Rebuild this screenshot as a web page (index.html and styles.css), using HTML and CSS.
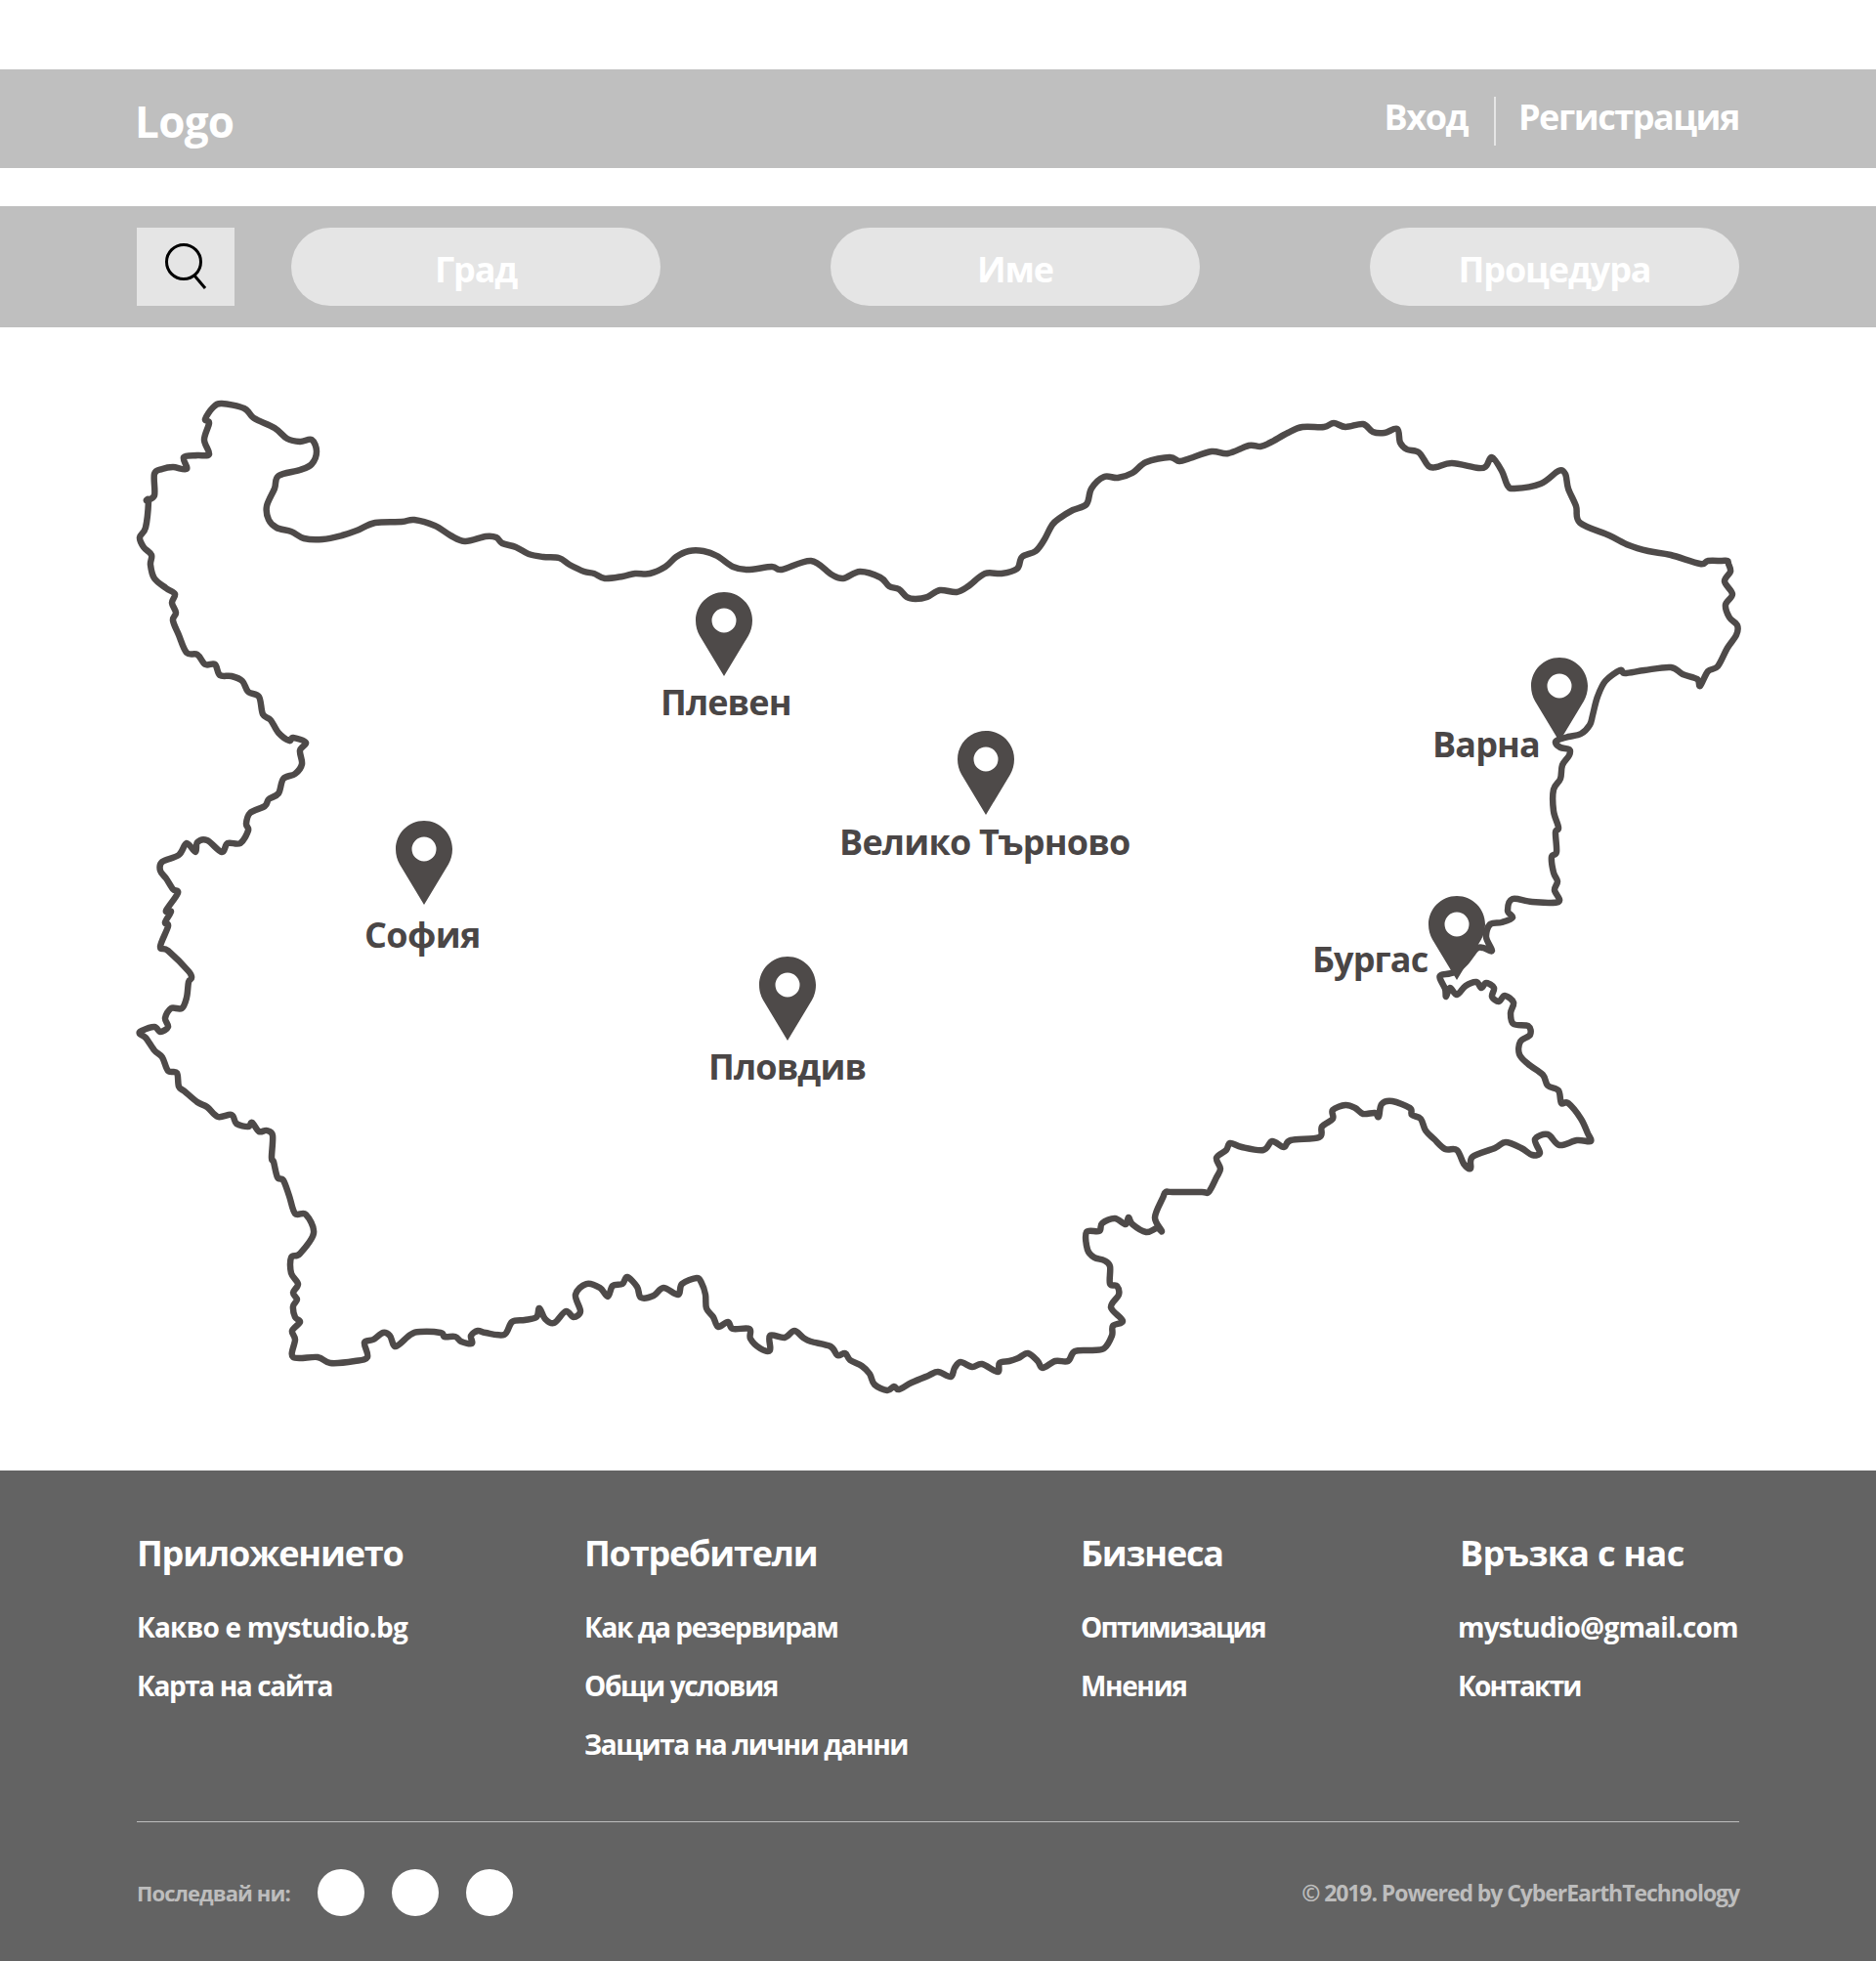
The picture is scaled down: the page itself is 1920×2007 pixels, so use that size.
FILE: index.html
```html
<!DOCTYPE html>
<html lang="bg">
<head>
<meta charset="utf-8">
<title>mystudio.bg</title>
<link rel="stylesheet" href="styles.css">
<script src="map.js" defer></script>
</head>
<body>
<header class="topbar">
  <div class="logo">Logo</div>
  <nav class="auth">
    <a class="auth-link">Вход</a>
    <span class="auth-sep"></span>
    <a class="auth-link">Регистрация</a>
  </nav>
</header>
<section class="search">
  <button class="search-btn" aria-label="Търсене">
    <svg class="search-icon" viewBox="0 0 44 48"><circle cx="20" cy="19" r="17.5"/><line x1="31" y1="33" x2="42" y2="46"/></svg>
  </button>
  <div class="pills">
    <div class="pill">Град</div>
    <div class="pill">Име</div>
    <div class="pill">Процедура</div>
  </div>
</section>
<main class="map">
  <svg class="map-svg" viewBox="0 335 1920 1170">
    <path class="border" id="border" data-points="227,413 250,418 260,428 281,438 294,449 307,452 319,450 324,462 319,475 307,481 285,487 281,500 273,518 275,532 283,540 298,544 311,551 330,552 350,548 365,543 384,535 411,534 424,532 445,538 461,548 476,554 497,549 508,550 514,556 528,560 541,567 556,570 572,571 583,578 598,585 608,587 619,592 637,590 650,587 665,587 681,580 692,570 705,564 720,564 734,569 750,580 765,583 790,580 800,583 830,574 851,588 863,592 880,585 901,591 910,600 920,603 928,611 937,613 949,611 962,604 979,606 991,600 1008,587 1025,587 1041,582 1046,570 1060,564 1069,552 1077,537 1085,530 1098,522 1112,516 1117,500 1130,488 1144,489 1159,484 1173,473 1197,468 1207,472 1218,469 1240,462 1257,464 1278,456 1290,457 1300,453 1318,443 1333,437 1355,437 1365,433 1377,437 1395,434 1405,442 1417,443 1430,439 1433,453 1440,460 1452,463 1462,477 1470,478 1486,474 1513,479 1521,477 1527,468 1537,482 1543,497 1550,500 1577,495 1595,482 1602,485 1605,500 1613,518 1617,535 1647,548 1667,558 1687,564 1710,568 1740,577 1748,574 1762,574 1768,574 1769,577 1771,585 1765,595 1773,608 1766,619 1770,632 1778,640 1777,650 1768,663 1758,682 1748,687 1740,702 1737,695 1722,690 1710,683 1683,686 1663,689 1658,686 1643,697 1635,713 1630,732 1627,742 1618,751 1605,754 1595,757 1592,760 1597,765 1606,767 1606,773 1599,783 1597,797 1590,808 1590,830 1595,847 1592,852 1593,872 1588,877 1590,893 1594,902 1591,911 1595,923 1568,923 1548,920 1543,932 1548,939 1537,944 1525,946 1521,959 1527,973 1518,970 1511,971 1500,985 1488,995 1475,998 1474,1002 1479,1012 1480,1020 1484,1011 1491,1018 1500,1009 1511,1005 1516,1011 1521,1006 1529,1011 1527,1020 1534,1025 1540,1019 1549,1026 1546,1037 1549,1048 1564,1050 1566,1059 1556,1066 1555,1079 1564,1089 1579,1100 1584,1111 1595,1116 1598,1129 1605,1129 1618,1145 1625,1160 1628,1168 1614,1167 1596,1172 1584,1161 1571,1166 1576,1180 1568,1182 1557,1175 1541,1169 1530,1175 1507,1184 1505,1196 1498,1191 1491,1177 1479,1176 1468,1166 1459,1157 1454,1145 1445,1141 1443,1134 1425,1127 1414,1130 1411,1143 1407,1139 1395,1140 1387,1134 1377,1131 1364,1136 1364,1145 1353,1153 1350,1164 1321,1167 1314,1174 1302,1168 1293,1177 1271,1174 1259,1170 1255,1177 1245,1185 1249,1196 1245,1205 1237,1220 1230,1220 1200,1220 1193,1220 1190,1226 1182,1246 1189,1260 1184,1257 1173,1261 1159,1253 1155,1246 1152,1253 1141,1247 1128,1252 1125,1260 1112,1261 1113,1279 1120,1287 1130,1290 1136,1296 1136,1314 1143,1316 1145,1325 1137,1338 1149,1352 1139,1357 1138,1367 1130,1380 1118,1382 1100,1383 1093,1393 1080,1393 1067,1400 1062,1393 1052,1385 1042,1390 1033,1393 1023,1395 1021,1404 1005,1396 995,1399 983,1394 977,1400 973,1409 960,1404 950,1408 933,1415 920,1422 915,1419 908,1423 895,1417 890,1406 882,1398 870,1392 865,1385 857,1387 850,1378 830,1373 822,1369 813,1362 803,1369 788,1367 788,1382 778,1380 768,1370 767,1360 750,1360 745,1353 735,1358 730,1348 723,1339 722,1325 718,1313 713,1308 698,1314 694,1325 679,1318 669,1326 656,1328 652,1317 642,1307 637,1314 627,1316 622,1327 614,1318 600,1314 589,1325 594,1342 587,1348 579,1342 567,1354 558,1350 552,1339 549,1348 537,1351 524,1353 516,1366 497,1364 489,1362 482,1367 483,1375 472,1373 466,1368 455,1368 451,1364 430,1363 420,1366 405,1378 399,1367 392,1364 382,1371 373,1374 376,1389 363,1393 338,1395 325,1389 300,1389 302,1371 299,1362 307,1353 302,1348 300,1337 304,1330 300,1323 305,1314 298,1303 298,1287 307,1283 321,1262 313,1243 302,1242 296,1224 290,1208 284,1205 280,1189 278,1185 279,1162 273,1157 265,1158 258,1149 254,1153 242,1150 237,1141 223,1143 212,1133 202,1128 189,1117 183,1112 181,1098 172,1096 166,1082 158,1075 149,1062 143,1058 145,1055 158,1051 164,1056 172,1051 169,1042 175,1032 186,1032 191,1021 193,1005 196,1001 193,994 172,973 164,969 172,948 169,944 175,933 170,932 182,914 177,910 170,899 164,891 166,882 183,875 191,863 200,872 202,862 212,860 227,872 233,863 246,863 254,850 252,843 256,832 271,825 275,818 285,812 290,797 302,792 309,782 307,768 313,760 300,755 296,758 285,750 277,737 269,731 265,713 254,708 248,697 237,692 225,691 220,680 210,680 202,670 191,668 183,650 177,635 180,627 176,617 179,608 170,602 158,592 154,578 155,568 147,560 143,550 149,540 152,513 150,512 158,507 158,485 166,480 177,478 191,480 188,468 202,466 214,465 209,450 214,433 210,429 218,417"/>
    <symbol id="pin" viewBox="0 0 58 86">
      <path fill-rule="evenodd" d="M29 0C45 0 58 13 58 29C58 35 56.500 40 54 44.500L29 86L4 44.500C1.500 40 0 35 0 29C0 13 13 0 29 0ZM29 16.500A12.500 12.500 0 1 0 29 41.500A12.500 12.500 0 1 0 29 16.500Z"/>
    </symbol>
  </svg>
  <svg class="pin pin-pleven" viewBox="0 0 58 86"><use href="#pin"/></svg>
  <div class="city city-pleven">Плевен</div>
  <svg class="pin pin-tarnovo" viewBox="0 0 58 86"><use href="#pin"/></svg>
  <div class="city city-tarnovo">Велико Търново</div>
  <svg class="pin pin-sofia" viewBox="0 0 58 86"><use href="#pin"/></svg>
  <div class="city city-sofia">София</div>
  <svg class="pin pin-plovdiv" viewBox="0 0 58 86"><use href="#pin"/></svg>
  <div class="city city-plovdiv">Пловдив</div>
  <svg class="pin pin-varna" viewBox="0 0 58 86"><use href="#pin"/></svg>
  <div class="city city-varna">Варна</div>
  <svg class="pin pin-burgas" viewBox="0 0 58 86"><use href="#pin"/></svg>
  <div class="city city-burgas">Бургас</div>
</main>
<footer class="footer">
  <div class="columns">
    <div class="col">
      <h3 class="col-title">Приложението</h3>
      <a class="col-link col-link-latin">Какво е mystudio.bg</a>
      <a class="col-link">Карта на сайта</a>
    </div>
    <div class="col">
      <h3 class="col-title">Потребители</h3>
      <a class="col-link">Как да резервирам</a>
      <a class="col-link">Общи условия</a>
      <a class="col-link">Защита на лични данни</a>
    </div>
    <div class="col">
      <h3 class="col-title">Бизнеса</h3>
      <a class="col-link col-link-tight">Оптимизация</a>
      <a class="col-link">Мнения</a>
    </div>
    <div class="col">
      <h3 class="col-title col-title-wide">Връзка с нас</h3>
      <a class="col-link col-link-latin">mystudio@gmail.com</a>
      <a class="col-link col-link-tight">Контакти</a>
    </div>
  </div>
  <div class="bottom">
    <div class="follow">
      <span class="follow-label">Последвай ни:</span>
      <span class="dot"></span><span class="dot"></span><span class="dot"></span>
    </div>
    <div class="copy">© 2019. Powered by CyberEarthTechnology</div>
  </div>
</footer>
</body>
</html>
```
FILE: styles.css
```css
* { box-sizing: border-box; }
body {
  margin: 0;
  padding-top: 71px;
  background: #fff;
  font-family: "Open Sans", "Noto Sans", sans-serif;
  font-weight: 700;
  color: #fff;
}
.topbar {
  height: 101px;
  background: #bfbfbf;
  padding: 0 140px;
  display: flex;
  justify-content: space-between;
  align-items: flex-start;
}
.logo { font-size: 44px; line-height: 60px; margin: 23px 0 0 -2px; letter-spacing: -0.7px; }
.auth { display: flex; align-items: flex-start; margin-top: 28px; }
.auth-link { font-size: 36px; line-height: 44px; margin-top: -1px; letter-spacing: -1.45px; }
.auth-sep { width: 2px; height: 50px; background: #e5e5e5; margin: 0 23px 0 27px; }
.search {
  margin-top: 39px;
  height: 124px;
  background: #bfbfbf;
  padding: 22px 140px;
  display: flex;
  gap: 58px;
}
.search-btn {
  flex: none;
  width: 100px;
  height: 80px;
  border: 0;
  padding: 0;
  background: #e5e5e5;
  display: flex;
  align-items: center;
  justify-content: center;
}
.search-icon { width: 44px; height: 48px; fill: none; stroke: #000; stroke-width: 3; }
.pills { flex: 1; display: flex; justify-content: space-between; }
.pill {
  width: 378px;
  height: 80px;
  border-radius: 40px;
  background: #e5e5e5;
  text-align: center;
  font-size: 36px;
  line-height: 86px;
  letter-spacing: -1.1px;
}
.map { position: relative; height: 1170px; }
.map-svg { display: block; width: 1920px; height: 1170px; }
.border { fill: none; stroke: #4e4a49; stroke-width: 6.500; stroke-linejoin: round; stroke-linecap: round; }
.pin { position: absolute; width: 58px; height: 86px; fill: #4e4a49; }
.pin-pleven { left: 712px; top: 271px; }
.pin-tarnovo { left: 980px; top: 413px; }
.pin-sofia { left: 405px; top: 505px; }
.pin-plovdiv { left: 777px; top: 644px; }
.pin-varna { left: 1567px; top: 338px; }
.pin-burgas { left: 1462px; top: 582px; }
.city {
  position: absolute;
  font-size: 36px;
  line-height: 40px;
  color: #4a4646;
  white-space: nowrap;
  letter-spacing: -0.9px;
}
.city-pleven { left: 676px; top: 364px; }
.city-tarnovo { left: 859px; top: 507px; letter-spacing: -0.8px; }
.city-sofia { left: 373px; top: 602px; letter-spacing: -0.6px; }
.city-plovdiv { left: 725px; top: 737px; }
.city-varna { left: 1466px; top: 407px; }
.city-burgas { left: 1343px; top: 627px; }
.footer { height: 502px; background: #636363; padding: 63px 140px 0; }
.columns {
  display: grid;
  grid-template-columns: 458px 508px 386px 288px;
  height: 297px;
  border-bottom: 1px solid #bdbdbd;
}
.col { display: flex; flex-direction: column; align-items: flex-start; }
.col-title { margin: 0 0 23px; font-size: 36px; line-height: 44px; font-weight: 700; letter-spacing: -1.2px; }
.col-title-wide { margin-left: 2px; letter-spacing: -0.7px; }
.col-link { font-size: 28px; line-height: 60px; letter-spacing: -1.4px; white-space: nowrap; }
.col-link-latin { letter-spacing: -0.8px; }
.col-link-tight { letter-spacing: -1.8px; }
.bottom { display: flex; justify-content: space-between; align-items: center; height: 143px; }
.follow { display: flex; align-items: center; gap: 28px; }
.follow-label { font-size: 22px; color: #bdbdbd; letter-spacing: -0.9px; }
.dot { width: 48px; height: 48px; border-radius: 50%; background: #fff; }
.copy { font-size: 23px; color: #bdbdbd; letter-spacing: -1.07px; }
```
FILE: map.js
```js
// Builds a smooth closed curve (Catmull-Rom) through the traced border points.
var border = document.getElementById('border');
var pts = border.dataset.points.split(' ').map(function (p) { return p.split(',').map(Number); });
var n = pts.length;
var d = 'M' + pts[0][0] + ' ' + pts[0][1];
for (var i = 0; i < n; i++) {
  var p0 = pts[(i - 1 + n) % n], p1 = pts[i], p2 = pts[(i + 1) % n], p3 = pts[(i + 2) % n];
  d += 'C' + (p1[0] + (p2[0] - p0[0]) / 6).toFixed(1) + ' ' + (p1[1] + (p2[1] - p0[1]) / 6).toFixed(1) +
       ' ' + (p2[0] - (p3[0] - p1[0]) / 6).toFixed(1) + ' ' + (p2[1] - (p3[1] - p1[1]) / 6).toFixed(1) +
       ' ' + p2[0] + ' ' + p2[1];
}
border.setAttribute('d', d + 'Z');
```
